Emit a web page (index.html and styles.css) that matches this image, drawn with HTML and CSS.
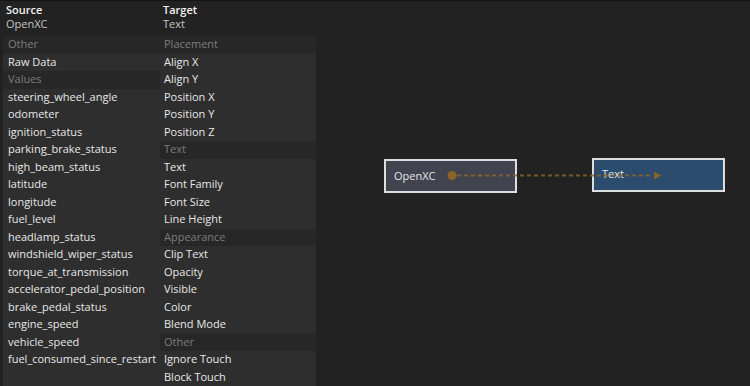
FILE: index.html
```html
<!DOCTYPE html>
<html>
<head>
<meta charset="utf-8">
<link rel="stylesheet" href="styles.css">
</head>
<body>
<div class="app">
  <div class="inspector">
    <div class="head">
      <div class="head-col">
        <div class="head-title">Source</div>
        <div class="head-sub">OpenXC</div>
      </div>
      <div class="head-col">
        <div class="head-title">Target</div>
        <div class="head-sub">Text</div>
      </div>
    </div>
    <div class="lists">
      <div class="list list-left">
        <div class="row group">Other</div>
        <div class="row">Raw Data</div>
        <div class="row group">Values</div>
        <div class="row">steering_wheel_angle</div>
        <div class="row">odometer</div>
        <div class="row">ignition_status</div>
        <div class="row">parking_brake_status</div>
        <div class="row">high_beam_status</div>
        <div class="row">latitude</div>
        <div class="row">longitude</div>
        <div class="row">fuel_level</div>
        <div class="row">headlamp_status</div>
        <div class="row">windshield_wiper_status</div>
        <div class="row">torque_at_transmission</div>
        <div class="row">accelerator_pedal_position</div>
        <div class="row">brake_pedal_status</div>
        <div class="row">engine_speed</div>
        <div class="row">vehicle_speed</div>
        <div class="row">fuel_consumed_since_restart</div>
      </div>
      <div class="list list-right">
        <div class="row group">Placement</div>
        <div class="row">Align X</div>
        <div class="row">Align Y</div>
        <div class="row">Position X</div>
        <div class="row">Position Y</div>
        <div class="row">Position Z</div>
        <div class="row group">Text</div>
        <div class="row">Text</div>
        <div class="row">Font Family</div>
        <div class="row">Font Size</div>
        <div class="row">Line Height</div>
        <div class="row group">Appearance</div>
        <div class="row">Clip Text</div>
        <div class="row">Opacity</div>
        <div class="row">Visible</div>
        <div class="row">Color</div>
        <div class="row">Blend Mode</div>
        <div class="row group">Other</div>
        <div class="row">Ignore Touch</div>
        <div class="row">Block Touch</div>
      </div>
    </div>
  </div>
  <div class="canvas">
    <div class="node node-source" style="left:68px;top:158px;">OpenXC</div>
    <div class="node node-target" style="left:276px;top:157px;">Text</div>
    <svg class="wire" width="434" height="385" viewBox="0 0 434 385">
      <circle cx="136" cy="174.5" r="4.5" fill="#8a6428"/>
      <line x1="141" y1="174.5" x2="337" y2="174.5" stroke="#8a6428" stroke-opacity="0.85" stroke-width="2" stroke-dasharray="4 3"/>
      <polygon points="338,170.5 345,174.5 338,178.5" fill="#8a6428"/>
    </svg>
  </div>
</div>
</body>
</html>
```

FILE: styles.css
```css
* { box-sizing: border-box; }

html, body {
  margin: 0;
  padding: 0;
  height: 100%;
}

body {
  background: #222222;
  font-family: "Open Sans", "Noto Sans", sans-serif;
  font-size: 11px;
  color: #e2e2e2;
  border-top: 1px solid #141414;
  overflow: hidden;
}

.app {
  display: flex;
  height: 385px;
}

.inspector {
  width: 316px;
  display: flex;
  flex-direction: column;
}

.head {
  display: grid;
  grid-template-columns: 157px 159px;
  height: 35px;
  padding-left: 6px;
  padding-top: 2px;
}

.head-col {
  display: flex;
  flex-direction: column;
  line-height: 14px;
}

.head-title {
  font-weight: 600;
  color: #f2f2f2;
}

.head-sub {
  color: #c4c4c4;
}

.lists {
  flex: 1;
  margin-left: 3px;
  display: grid;
  grid-template-columns: 157px 156px;
  background: #2e2e2e;
}

.list {
  display: flex;
  flex-direction: column;
}

.row {
  height: 17.5px;
  line-height: 16.5px;
  padding-bottom: 1px;
  padding-left: 5px;
  white-space: nowrap;
  color: #e8e8e8;
}

.list-right .row {
  padding-left: 4px;
}

.row.group {
  background: #272727;
  color: #7c7c7c;
}

.canvas {
  position: relative;
  flex: 1;
}

.node {
  position: absolute;
  width: 133px;
  height: 34px;
  border: 2px solid #dedede;
  padding-left: 8px;
  line-height: 30px;
  color: #e6e6e6;
}

.node-source {
  background: #41444f;
}

.node-target {
  background: #2b4c6c;
  line-height: 27px;
}

.wire {
  position: absolute;
  left: 0;
  top: 0;
  pointer-events: none;
}
```
